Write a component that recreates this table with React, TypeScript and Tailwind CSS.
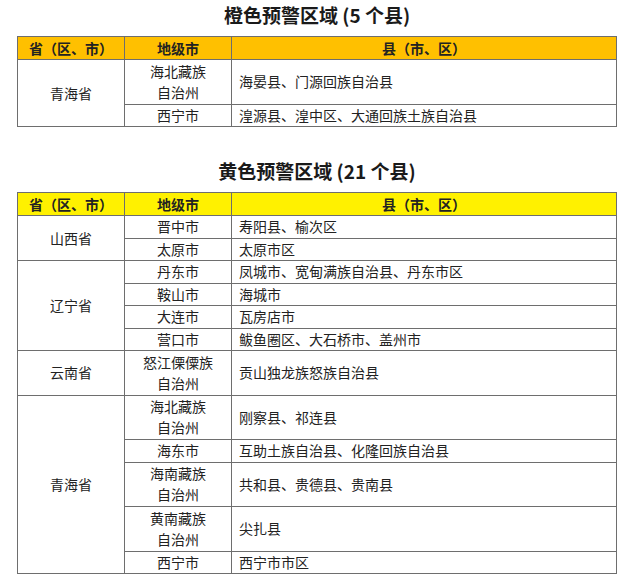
type Row = { city: string[]; counties: string };
type Group = { province: string; rows: Row[] };

const orange: Group[] = [
  {
    province: "青海省",
    rows: [
      { city: ["海北藏族", "自治州"], counties: "海晏县、门源回族自治县" },
      { city: ["西宁市"], counties: "湟源县、湟中区、大通回族土族自治县" },
    ],
  },
];

const yellow: Group[] = [
  {
    province: "山西省",
    rows: [
      { city: ["晋中市"], counties: "寿阳县、榆次区" },
      { city: ["太原市"], counties: "太原市区" },
    ],
  },
  {
    province: "辽宁省",
    rows: [
      { city: ["丹东市"], counties: "凤城市、宽甸满族自治县、丹东市区" },
      { city: ["鞍山市"], counties: "海城市" },
      { city: ["大连市"], counties: "瓦房店市" },
      { city: ["营口市"], counties: "鲅鱼圈区、大石桥市、盖州市" },
    ],
  },
  {
    province: "云南省",
    rows: [{ city: ["怒江傈僳族", "自治州"], counties: "贡山独龙族怒族自治县" }],
  },
  {
    province: "青海省",
    rows: [
      { city: ["海北藏族", "自治州"], counties: "刚察县、祁连县" },
      { city: ["海东市"], counties: "互助土族自治县、化隆回族自治县" },
      { city: ["海南藏族", "自治州"], counties: "共和县、贵德县、贵南县" },
      { city: ["黄南藏族", "自治州"], counties: "尖扎县" },
      { city: ["西宁市"], counties: "西宁市市区" },
    ],
  },
];

const cell = "border border-[#6e6e6e] p-0 align-middle";

function WarningTable({ title, head, groups }: { title: string; head: string; groups: Group[] }) {
  return (
    <section>
      <h2 className="h-[30px] w-[600px] text-center text-[19px] font-bold leading-[30px] text-[#1a1a1a]">{title}</h2>
      <table className="mt-[6px] w-[600px] table-fixed border-collapse text-[14px] text-[#222]">
        <colgroup>
          <col className="w-[107px]" />
          <col className="w-[107px]" />
          <col />
        </colgroup>
        <thead>
          <tr className={`h-[23px] ${head}`}>
            <th className={cell + " font-bold"}>省（区、市）</th>
            <th className={cell + " font-bold"}>地级市</th>
            <th className={cell + " font-bold"}>县（市、区）</th>
          </tr>
        </thead>
        <tbody>
          {groups.map((g) =>
            g.rows.map((r, i) => (
              <tr key={g.province + r.city.join("")} className={r.city.length > 1 ? "h-[44.5px]" : "h-[22.5px]"}>
                {i === 0 && (
                  <td rowSpan={g.rows.length} className={cell + " text-center"}>
                    {g.province}
                  </td>
                )}
                <td className={cell + " text-center leading-[21px]"}>
                  {r.city.map((c) => (
                    <div key={c}>{c}</div>
                  ))}
                </td>
                <td className={cell + " pl-[7px] text-left"}>{r.counties}</td>
              </tr>
            ))
          )}
        </tbody>
      </table>
    </section>
  );
}

export default function App() {
  return (
    <div
      className="h-[587px] w-[640px] bg-white pl-[17px]"
      style={{ fontFamily: '"Noto Sans CJK SC", "Noto Sans", sans-serif' }}
    >
      <WarningTable title="橙色预警区域 (5 个县)" head="bg-[#ffc000]" groups={orange} />
      <div className="h-[29px]" />
      <WarningTable title="黄色预警区域 (21 个县)" head="bg-[#fff100]" groups={yellow} />
    </div>
  );
}
